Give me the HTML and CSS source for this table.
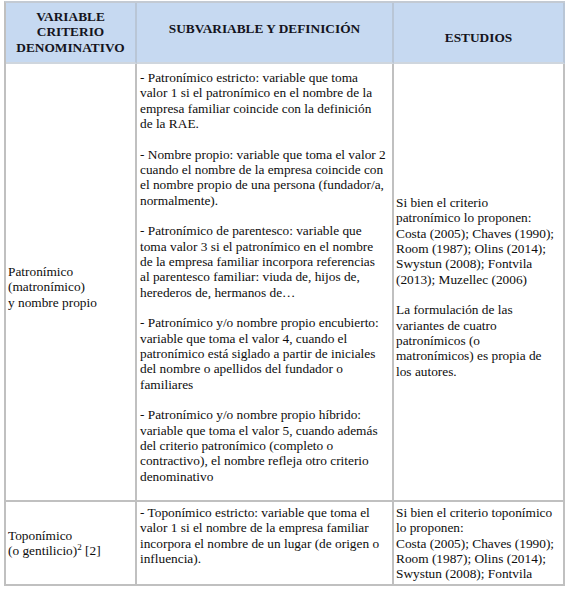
FILE: index.html
```html
<!DOCTYPE html>
<html lang="es">
<head>
<meta charset="utf-8">
<title>Criterios denominativos</title>
<link rel="stylesheet" href="styles.css">
</head>
<body>
<table class="grid">
  <colgroup>
    <col class="c1">
    <col class="c2">
    <col class="c3">
  </colgroup>
  <thead>
    <tr>
      <th class="h1">VARIABLE<br>CRITERIO<br>DENOMINATIVO</th>
      <th class="h2">SUBVARIABLE Y DEFINICIÓN</th>
      <th class="h3">ESTUDIOS</th>
    </tr>
  </thead>
  <tbody>
    <tr class="r1">
      <td class="var mid">Patronímico<br>(matronímico)<br>y nombre propio</td>
      <td class="def">
        <p>- Patronímico estricto: variable que toma<br>valor 1 si el patronímico en el nombre de la<br>empresa familiar coincide con la definición<br>de la RAE.</p>
        <p>- Nombre propio: variable que toma el valor 2<br>cuando el nombre de la empresa coincide con<br>el nombre propio de una persona (fundador/a,<br>normalmente).</p>
        <p>- Patronímico de parentesco: variable que<br>toma valor 3 si el patronímico en el nombre<br>de la empresa familiar incorpora referencias<br>al parentesco familiar: viuda de, hijos de,<br>herederos de, hermanos de…</p>
        <p>- Patronímico y/o nombre propio encubierto:<br>variable que toma el valor 4, cuando el<br>patronímico está siglado a partir de iniciales<br>del nombre o apellidos del fundador o<br>familiares</p>
        <p>- Patronímico y/o nombre propio híbrido:<br>variable que toma el valor 5, cuando además<br>del criterio patronímico (completo o<br>contractivo), el nombre refleja otro criterio<br>denominativo</p>
      </td>
      <td class="est mid">
        <p>Si bien el criterio<br>patronímico lo proponen:<br>Costa (2005); Chaves (1990);<br>Room (1987); Olins (2014);<br>Swystun (2008); Fontvila<br>(2013); Muzellec (2006)</p>
        <p>La formulación de las<br>variantes de cuatro<br>patronímicos (o<br>matronímicos) es propia de<br>los autores.</p>
      </td>
    </tr>
    <tr class="r2">
      <td class="var">Toponímico<br>(o gentilicio)<sup>2</sup> [2]</td>
      <td class="def top">
        <p>- Toponímico estricto: variable que toma el<br>valor 1 si el nombre de la empresa familiar<br>incorpora el nombre de un lugar (de origen o<br>influencia).</p>
      </td>
      <td class="est top">
        <p>Si bien el criterio toponímico<br>lo proponen:<br>Costa (2005); Chaves (1990);<br>Room (1987); Olins (2014);<br>Swystun (2008); Fontvila</p>
      </td>
    </tr>
  </tbody>
</table>
</body>
</html>
```

FILE: styles.css
```css
html, body {
  margin: 0;
  padding: 0;
  background: #ffffff;
}

body {
  font-family: "Liberation Serif", "Times New Roman", serif;
  font-size: 13.333px;
  line-height: 15.33px;
  color: #0d0d0d;
  overflow: hidden;
  height: 590px;
}

.grid {
  margin: 1px 0 0 4px;
  border-collapse: separate;
  border-spacing: 0;
  table-layout: fixed;
  width: 559px;
  border-top: 2px solid #c3cad3;
  border-left: 2px solid #c0c0c0;
}

.c1 { width: 131px; }
.c2 { width: 257px; }
.c3 { width: 171px; }

.grid th {
  background: #c6d9f1;
  font-weight: bold;
  font-size: 13.333px;
  color: #141420;
  text-align: center;
  vertical-align: middle;
  border-right: 2px solid #b9c6d6;
  border-bottom: 2px solid #cfd6de;
  padding: 6px 2px 7px;
  white-space: nowrap;
}

.grid th.h2 {
  padding-top: 0;
  padding-bottom: 7px;
}

.grid th.h3 {
  padding-top: 10px;
  padding-bottom: 0;
}

.grid td {
  border-right: 2px solid #c0c0c0;
  border-bottom: 2px solid #c0c0c0;
  padding: 3px 2px 3px 3px;
  white-space: nowrap;
  vertical-align: middle;
}

.grid td.var {
  padding-left: 2px;
}

.grid p {
  margin: 0 0 15.33px;
}

.grid p:last-child {
  margin-bottom: 0;
}

.r1 td.def {
  padding-top: 6px;
  padding-bottom: 16px;
  vertical-align: top;
}

.r1 td.mid {
  padding-top: 10px;
  padding-bottom: 0;
}

.grid td.top {
  vertical-align: top;
}

.grid td.est {
  padding-left: 2px;
}

sup {
  font-size: 9px;
  line-height: 0;
  vertical-align: 5px;
}
```
